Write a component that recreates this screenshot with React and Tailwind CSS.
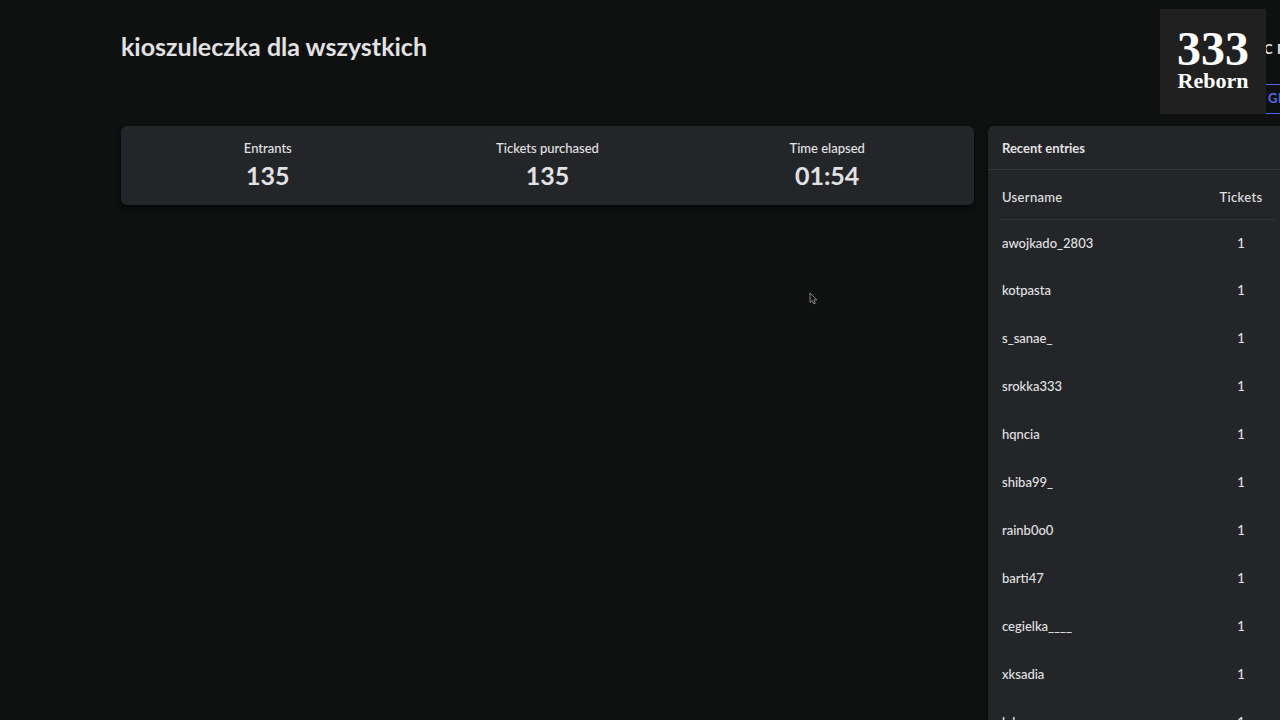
const stats = [
  { label: "Entrants", value: "135" },
  { label: "Tickets purchased", value: "135" },
  { label: "Time elapsed", value: "01:54" },
];

const entries = [
  "awojkado_2803",
  "kotpasta",
  "s_sanae_",
  "srokka333",
  "hqncia",
  "shiba99_",
  "rainb0o0",
  "barti47",
  "cegielka____",
  "xksadia",
  "luk",
];

function Header() {
  return (
    <header className="flex h-[126px] shrink-0 pl-[121px]">
      <h1 className="flex-1 pt-[30px] text-[25px] font-bold leading-8">
        kioszuleczka dla wszystkich
      </h1>
      <div className="w-4 pt-10 text-[13px] font-bold">
        <p className="h-11 w-16 leading-[18px] tracking-wider">C R</p>
        <button
          type="button"
          className="block h-[30px] w-16 border border-[#4b63e6] pl-[3px] text-left tracking-wider text-[#5468e8]"
        >
          GI
        </button>
      </div>
    </header>
  );
}

function Stats() {
  return (
    <section className="grid h-[79px] flex-1 grid-cols-3 rounded-md bg-[#242528] px-[7px] pt-3 text-center shadow-md shadow-black/60">
      {stats.map((s) => (
        <div key={s.label}>
          <p className="text-[13px] leading-5">{s.label}</p>
          <p className="text-[25px] font-bold leading-[34px]">{s.value}</p>
        </div>
      ))}
    </section>
  );
}

function RecentEntries() {
  return (
    <aside className="w-[292px] rounded-tl-md bg-[#242528] shadow-md shadow-black/60">
      <h2 className="h-11 border-b border-[#35373b] pl-[14px] text-[13px] font-bold leading-[44px]">
        Recent entries
      </h2>
      <div className="pl-3 pr-1">
        <table className="w-full table-fixed border-collapse text-[13px]">
          <thead>
            <tr className="h-[49px] border-b border-[#303236]">
              <th scope="col" className="pl-0.5 pt-1.5 text-left font-medium tracking-wide">
                Username
              </th>
              <th scope="col" className="w-[70px] pt-1.5 text-center font-medium tracking-wide">
                Tickets
              </th>
            </tr>
          </thead>
          <tbody>
            {entries.map((name) => (
              <tr key={name} className="h-12">
                <td className="pl-0.5">{name}</td>
                <td className="text-center">1</td>
              </tr>
            ))}
          </tbody>
        </table>
      </div>
    </aside>
  );
}

function Logo() {
  return (
    <div className="absolute right-[14px] top-[9px] flex h-[105px] w-[106px] flex-col items-center bg-[#202020] pt-5 font-['Liberation_Serif',serif] font-bold text-white">
      <span className="text-[48px] leading-10">333</span>
      <span className="text-[22px] leading-6">Reborn</span>
    </div>
  );
}

function Pointer() {
  return (
    <svg
      className="absolute left-[809px] top-[292px]"
      width="10"
      height="13"
      viewBox="0 0 10 13"
      fill="#0a0a0a"
      stroke="#a3a3a3"
      strokeWidth="0.8"
      aria-hidden="true"
    >
      <path d="M1 1v9.5l2.2-2 1.5 3.4 1.6-.7-1.5-3.3h3Z" />
    </svg>
  );
}

export default function App() {
  return (
    <div className="relative flex h-screen flex-col overflow-hidden bg-[#0f1110] font-['Lato',sans-serif] font-medium text-[#e2e2e4]">
      <Header />
      <main className="flex flex-1 items-start gap-[14px] pl-[121px]">
        <Stats />
        <RecentEntries />
      </main>
      <Logo />
      <Pointer />
    </div>
  );
}
